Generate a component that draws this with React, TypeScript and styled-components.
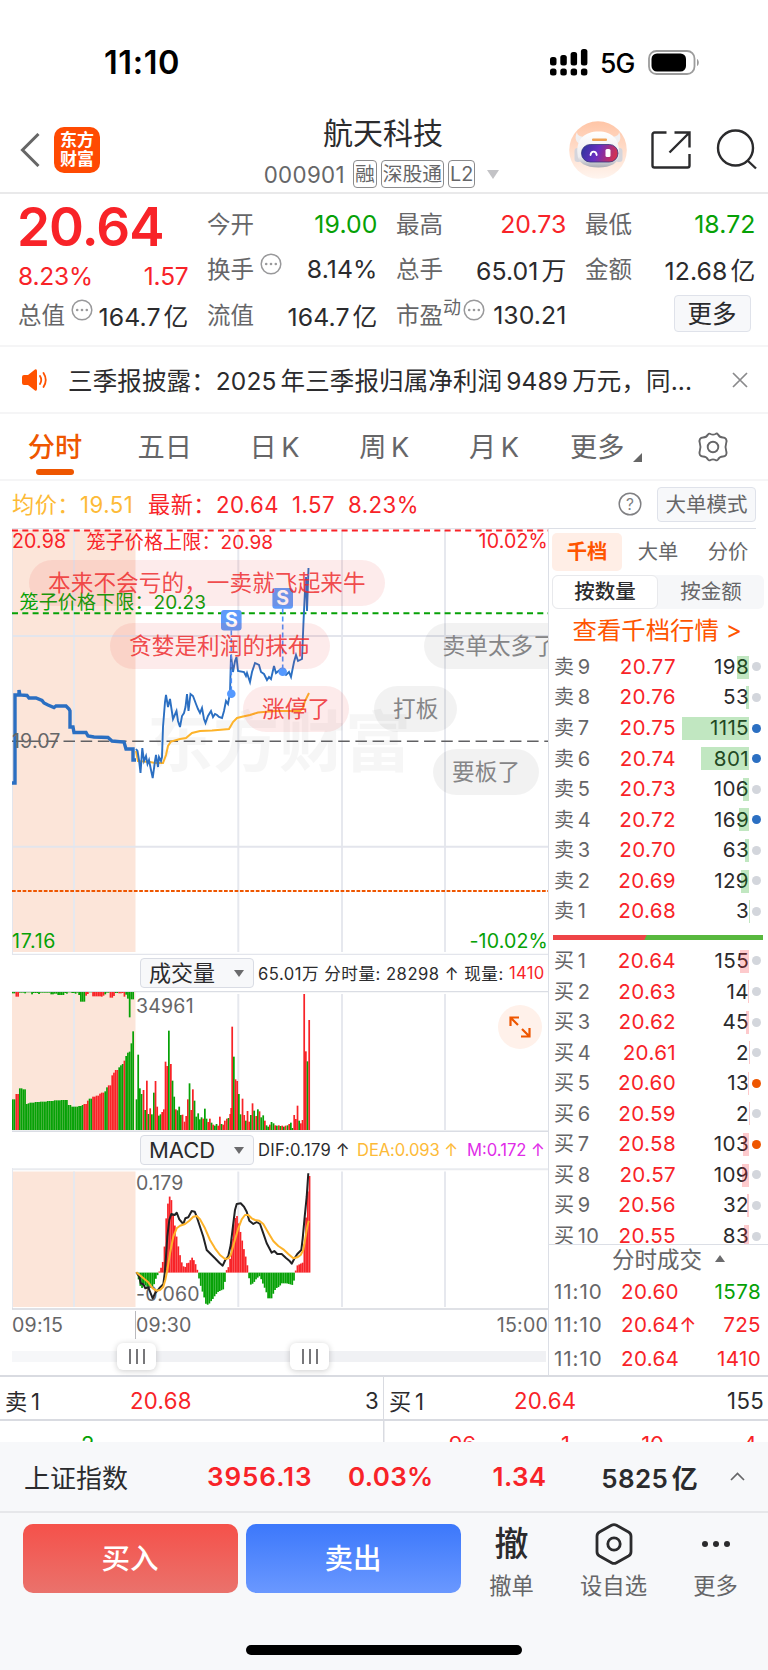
import React from "react";
import styled, { createGlobalStyle, css } from "styled-components";

const RED = "#f82328";
const GREEN = "#06a106";
const ORANGE = "#ee5600";
const DARK = "#2b2b2d";
const GREY = "#666668";
const LINE = "#dcdfe6";

const Global = createGlobalStyle`
  * { box-sizing: border-box; }
  body {
    margin: 0;
    background: #fff;
    color: ${DARK};
    font-family: Inter, "Noto Sans CJK SC", sans-serif;
    font-size: 22px;
    -webkit-font-smoothing: antialiased;
  }
`;

const Screen = styled.div`
  width: 768px;
  height: 1670px;
  overflow: hidden;
  display: flex;
  flex-direction: column;
  background: #fff;
`;

/* ---------- status bar ---------- */
const StatusBar = styled.div`
  height: 110px;
  padding: 15px 68px 0 104px;
  display: flex;
  align-items: center;
  justify-content: space-between;
  color: #000;
`;
const Clock = styled.div`
  font-size: 32.5px;
  font-weight: 600;
  letter-spacing: 0.6px;
`;
const StatusIcons = styled.div`
  display: flex;
  align-items: center;
`;
const Network = styled.span`
  font-size: 26.5px;
  font-weight: 500;
  line-height: 30px;
  width: 35px;
  margin: 0 13px 0 12px;
  padding-top: 1px;
  letter-spacing: -0.8px;
`;

/* ---------- header ---------- */
const Header = styled.header`
  height: 84px;
  flex: none;
  border-bottom: 2px solid #e9e9ea;
  display: grid;
  grid-template-columns: 230px 1fr 230px;
`;
const HeaderLeft = styled.div`
  display: flex;
  align-items: center;
  gap: 14px;
  padding: 0 0 3px 20px;
`;
const Logo = styled.div`
  width: 46px;
  height: 46px;
  border-radius: 10px;
  background: #ff4a02;
  color: #fff;
  font-size: 17px;
  font-weight: 700;
  line-height: 19px;
  padding-top: 4px;
  text-align: center;
`;
const HeaderTitle = styled.div`
  display: flex;
  flex-direction: column;
  align-items: center;
  padding-right: 2px;
`;
const StockName = styled.div`
  font-size: 30px;
  line-height: 40px;
  margin-top: 3px;
`;
const StockMeta = styled.div`
  display: flex;
  align-items: center;
  height: 30px;
  margin-top: 6px;
  padding: 0 3px 0 0;
  gap: 4px;
  color: ${GREY};
`;
const Code = styled.span`
  font-size: 22.3px;
  letter-spacing: 0.35px;
  margin-right: 4px;
`;
const Badge = styled.span`
  height: 28px;
  line-height: 26px;
  border: 1.5px solid #8b8b8d;
  border-radius: 4px;
  font-size: 19.8px;
  padding: 0 1px;
`;
const Caret = styled.i<{ $up?: boolean; $size?: number; $color?: string; $ml?: number }>`
  width: 0;
  height: 0;
  margin-left: ${(p) => p.$ml ?? 0}px;
  border: ${(p) => p.$size ?? 5}px solid transparent;
  ${(p) =>
    p.$up
      ? css`border-top-width: 0; border-bottom: ${(p.$size ?? 5) + 1.5}px solid ${p.$color ?? "#6b6b6d"};`
      : css`border-bottom-width: 0; border-top: ${(p.$size ?? 5) + 2.5}px solid ${p.$color ?? "#6b6b6d"};`}
`;
const HeaderRight = styled.div`
  display: flex;
  align-items: center;
  padding: 0 0 3px 31px;
  gap: 24px;
`;

/* ---------- quote panel ---------- */
const Quote = styled.section`
  height: 153px;
  flex: none;
  border-bottom: 2px solid #f5f5f6;
  padding: 7px 12px 0 18px;
  display: grid;
  grid-template-columns: repeat(4, 170.5px);
  column-gap: 18.5px;
`;
const QuoteCol = styled.div`
  display: flex;
  flex-direction: column;
`;
const QuoteRow = styled.div`
  height: 45.6px;
  display: flex;
  align-items: center;
  justify-content: space-between;
  white-space: nowrap;
`;
const BigPrice = styled.div`
  height: 60px;
  font-size: 53px;
  line-height: 52px;
  font-weight: 600;
  letter-spacing: -0.9px;
  margin-left: -1px;
  color: ${RED};
`;
const PriceDelta = styled.div`
  height: 31px;
  display: flex;
  justify-content: space-between;
  align-items: center;
  padding-bottom: 1px;
  font-size: 24.5px;
  letter-spacing: -0.2px;
  color: ${RED};
`;
const Key = styled.span`
  font-size: 23.5px;
  color: ${GREY};
  display: flex;
  align-items: center;
  margin-top: -2px;
`;
const Val = styled.span<{ $c?: string }>`
  font-size: 24.8px;
  letter-spacing: 0.1px;
  word-spacing: -4px;
  color: ${(p) => p.$c ?? DARK};
`;
const Sup = styled.sup`
  font-size: 18px;
  line-height: 20px;
  margin-top: -12px;
`;
const MoreBtn = styled.button`
  width: 77px;
  height: 37px;
  margin: -2px 5px 0 auto;
  padding: 0;
  border: 1.5px solid #dfe2ea;
  border-radius: 4px;
  background: #f7f8fa;
  color: ${DARK};
  font: 24.5px/32px Inter, "Noto Sans CJK SC", sans-serif;
`;

/* ---------- news + tabs ---------- */
const News = styled.section`
  height: 67px;
  flex: none;
  border-bottom: 2px solid #f5f5f6;
  display: flex;
  align-items: center;
  padding: 0 20px 0 22px;
`;
const NewsText = styled.div`
  font-size: 24.5px;
  letter-spacing: 0.13px;
  word-spacing: -3px;
  margin-left: 20px;
  padding-bottom: 1px;
  flex: 1;
  white-space: nowrap;
`;
const Tabs = styled.nav`
  height: 67px;
  flex: none;
  border-bottom: 2px solid #f5f5f6;
  display: grid;
  grid-template-columns: repeat(5, 109.8px) 119px 1fr;
`;
const Tab = styled.div<{ $on?: boolean }>`
  display: flex;
  flex-direction: column;
  align-items: center;
  padding-top: 14px;
  font-size: 27.2px;
  line-height: 40px;
  word-spacing: -3px;
  white-space: nowrap;
  color: ${(p) => (p.$on ? ORANGE : GREY)};
  font-weight: ${(p) => (p.$on ? 500 : 400)};
  &::after {
    content: "";
    width: 38px;
    height: 6px;
    margin-top: 1px;
    border-radius: 3px;
    background: ${(p) => (p.$on ? ORANGE : "transparent")};
  }
`;
const MoreTab = styled.div`
  display: flex;
  align-items: flex-start;
  padding: 14px 0 0 21px;
  gap: 9px;
  font-size: 27.2px;
  line-height: 40px;
  color: ${GREY};
  svg { margin-top: 25px; }
`;
const GearSlot = styled.div`
  padding: 16px 0 0 28px;
`;

/* ---------- price summary ---------- */
const Summary = styled.section`
  height: 47px;
  flex: none;
  display: flex;
  align-items: center;
  padding: 1px 12px 0;
  font-size: 22.2px;
  line-height: 30px;
  color: ${RED};
  white-space: nowrap;
`;
const Avg = styled.span`
  color: #fdba37;
  width: 136px;
  letter-spacing: 0.5px;
`;
const Nums = styled.span`
  margin-right: 13px;
  letter-spacing: 0.45px;
`;
const Help = styled.svg`
  margin: -2px 0 0 auto;
`;
const BigOrderBtn = styled.button`
  width: 99px;
  height: 35px;
  padding: 0;
  margin: -1px 0 0 15px;
  border: 1.5px solid #dfe2ea;
  border-radius: 4px;
  background: #f7f8fa;
  color: ${GREY};
  font: 20.5px/30px Inter, "Noto Sans CJK SC", sans-serif;
`;

/* ---------- main split ---------- */
const Main = styled.main`
  height: 849px;
  flex: none;
  display: grid;
  grid-template-columns: 548px 220px;
  border-bottom: 2px solid #d9dbe1;
`;
const ChartCol = styled.div`
  padding-left: 12px;
  display: flex;
  flex-direction: column;
  min-width: 0;
`;
const ChartBox = styled.div<{ $h: number }>`
  position: relative;
  flex: none;
  height: ${(p) => p.$h}px;
  overflow: hidden;
  svg { display: block; }
`;
const Bubble = styled.div<{ $x: number; $y: number; $hot?: boolean }>`
  position: absolute;
  left: ${(p) => p.$x}px;
  top: ${(p) => p.$y}px;
  height: 46px;
  line-height: 45px;
  padding: 0 19px;
  border-radius: 23px;
  font-size: 22.6px;
  letter-spacing: 0.1px;
  white-space: nowrap;
  background: ${(p) => (p.$hot ? "rgba(235,60,60,.1)" : "rgba(0,0,0,.05)")};
  color: ${(p) => (p.$hot ? "rgba(238,40,42,.84)" : "#858587")};
`;
const IndicatorBar = styled.div`
  height: 36px;
  flex: none;
  display: flex;
  align-items: center;
  padding-left: 128px;
  font-size: 16.6px;
  white-space: nowrap;
`;
const Picker = styled.div`
  width: 114px;
  height: 30px;
  margin-right: 4px;
  padding: 0 9px 0 8px;
  border: 1.5px solid #d9dce4;
  border-radius: 4px;
  background: #f7f8fa;
  display: flex;
  align-items: center;
  justify-content: space-between;
  font-size: 22px;
  line-height: 26px;
`;
const Stat = styled.span<{ $c?: string; $w?: number; $ls?: number }>`
  color: ${(p) => p.$c ?? DARK};
  letter-spacing: ${(p) => p.$ls ?? 0.35}px;
  ${(p) => p.$w && css`width: ${p.$w}px;`}
`;
const Expand = styled.button`
  position: absolute;
  right: 6px;
  top: 14px;
  width: 44px;
  height: 44px;
  padding: 11px;
  border: 0;
  border-radius: 50%;
  background: #fff1ea;
`;
const Axis = styled.div`
  height: 28px;
  flex: none;
  margin-top: 1px;
  display: grid;
  grid-template-columns: 123px 1fr auto;
  font-size: 19.6px;
  letter-spacing: 0.2px;
  line-height: 28px;
  color: ${GREY};
`;
const OpenTime = styled.span`
  border-left: 1.5px solid #b9b9bd;
`;
const Slider = styled.div`
  height: 35px;
  flex: none;
  display: flex;
  align-items: center;
  background: linear-gradient(#f6f7f9, #f6f7f9) 0 12px / 120px 11px no-repeat,
    linear-gradient(#f0f1f4, #f0f1f4) 110px 12px / 424px 11px no-repeat;
`;
const Handle = styled.div<{ $gap: number }>`
  width: 39px;
  height: 27px;
  margin-left: ${(p) => p.$gap}px;
  border-radius: 6px;
  background: #fff;
  box-shadow: 0 1px 6px rgba(0, 0, 0, 0.2);
  display: flex;
  align-items: center;
  justify-content: center;
  gap: 5px;
  i { width: 2px; height: 15px; background: #77777a; }
`;

/* ---------- order book ---------- */
const Book = styled.aside`
  border-left: 1.5px solid ${LINE};
  display: flex;
  flex-direction: column;
  min-width: 0;
`;
const BookTabs = styled.div`
  border-top: 1.5px solid ${LINE};
  margin-right: 12px;
  padding: 4px 0 0 3px;
  height: 47px;
  flex: none;
  display: grid;
  grid-template-columns: 70px 72px 68px;
`;
const BookTab = styled.div<{ $on?: boolean }>`
  height: 38px;
  line-height: 37px;
  text-align: center;
  font-size: 20.3px;
  border-radius: 5px;
  color: ${(p) => (p.$on ? "#ff5500" : GREY)};
  font-weight: ${(p) => (p.$on ? 700 : 400)};
  background: ${(p) => (p.$on ? "#ffeee6" : "transparent")};
`;
const Segment = styled.div`
  flex: none;
  height: 34px;
  margin: 0 4px 0 3px;
  border-radius: 6px;
  background: #f6f7f9;
  display: grid;
  grid-template-columns: 1fr 1fr;
`;
const SegItem = styled.div<{ $on?: boolean }>`
  line-height: ${(p) => (p.$on ? 32 : 34)}px;
  font-size: 20.5px;
  text-align: center;
  border-radius: 6px;
  ${(p) =>
    p.$on
      ? css`background: #fff; border: 1.5px solid #e8e9ec; font-weight: 500; color: ${DARK};`
      : css`color: ${GREY};`}
`;
const BookLink = styled.a`
  height: 42.6px;
  flex: none;
  padding-left: 23.5px;
  line-height: 43px;
  font-size: 24.4px;
  color: #ff5500;
  white-space: nowrap;
`;
const Level = styled.div`
  position: relative;
  height: 30.57px;
  flex: none;
  display: grid;
  grid-template-columns: 66px 56px 1fr 19px;
  align-items: center;
  padding-left: 5px;
  font-size: 20.6px;
  line-height: 30px;
  letter-spacing: 0.35px;
`;
const Side = styled.span`
  color: ${GREY};
  font-size: 20px;
  white-space: nowrap;
  word-spacing: -2.5px;
`;
const Price = styled.span`
  color: ${RED};
  display: flex;
  justify-content: flex-end;
`;
const Volume = styled.span`
  text-align: right;
`;
const Depth = styled.i<{ $sell: boolean }>`
  position: absolute;
  right: 19px;
  top: 4px;
  height: 23px;
  background: ${(p) => (p.$sell ? "rgba(6,161,6,.25)" : "rgba(248,35,40,.24)")};
`;
const Dot = styled.i<{ $c: string }>`
  width: 9px;
  height: 9px;
  margin-left: 2.5px;
  border-radius: 50%;
  background: ${(p) => p.$c};
`;
const Ratio = styled.div`
  height: 5px;
  flex: none;
  margin: 8px 5px 6px 4px;
  background: linear-gradient(115deg, #ee4447 44%, #58b83e 44.2%);
`;
const BuyList = styled.div`
  height: 299.4px;
  flex: none;
  overflow: hidden;
  border-bottom: 1.5px solid ${LINE};
`;
const TradeTitle = styled.div`
  height: 29.5px;
  flex: none;
  display: flex;
  align-items: center;
  justify-content: center;
  gap: 13px;
  padding: 0 0 3px 28px;
  margin-right: 8px;
  color: ${GREY};
  font-size: 22.5px;
`;
const Trade = styled.div`
  height: 33.4px;
  flex: none;
  display: grid;
  grid-template-columns: 67px 1fr 60px;
  align-items: center;
  padding: 0 7px 0 5px;
  font-size: 20.6px;
  letter-spacing: 0.9px;
  color: ${GREY};
`;
const TradeCell = styled.span<{ $c: string; $right?: boolean }>`
  color: ${(p) => p.$c};
  letter-spacing: 0.35px;
  white-space: nowrap;
  text-align: ${(p) => (p.$right ? "right" : "left")};
`;

/* ---------- best bid / ask ---------- */
const BestRow = styled.div`
  height: 44px;
  flex: none;
  display: grid;
  grid-template-columns: 383px 385px;
  border-bottom: 2px solid #d9dbe1;
`;
const BestCell = styled.div`
  display: grid;
  grid-template-columns: 125px 1fr auto;
  align-items: center;
  padding: 4px 4px 0 5px;
  font-size: 22.2px;
  letter-spacing: 0.3px;
  word-spacing: -3px;
  & + & { border-left: 1.5px solid #d9dbe1; }
  em { color: ${RED}; font-style: normal; }
`;
const CutRow = styled.div`
  height: 21px;
  flex: none;
  overflow: hidden;
  display: grid;
  grid-template-columns: 383px 93px 94px 94px 93px;
  padding-top: 8px;
  line-height: 30px;
  text-align: right;
  color: ${RED};
  background: linear-gradient(#d9dbe1, #d9dbe1) 383px 0 / 1.5px 100% no-repeat;
`;
const CutFirst = styled.span`
  color: ${GREEN};
  text-align: left;
  padding-left: 81px;
`;

/* ---------- bottom ---------- */
const IndexBar = styled.div`
  height: 71px;
  flex: none;
  background: #f7f8fa;
  border-bottom: 2px solid #e6e7ea;
  display: grid;
  grid-template-columns: 183px 141px 105px 93.5px 151.5px 1fr;
  align-items: center;
  padding-left: 24px;
  padding-bottom: 1px;
  font-size: 26px;
`;
const IndexName = styled.span`
  font-size: 26px;
`;
const IndexNum = styled.b<{ $right?: boolean; $wide?: boolean; $c?: string }>`
  font-weight: 600;
  color: ${(p) => p.$c ?? RED};
  text-align: ${(p) => (p.$right ? "right" : "left")};
  letter-spacing: ${(p) => (p.$wide ? 0.95 : 0.35)}px;
  word-spacing: -3.5px;
`;
const IndexCaret = styled.svg`
  margin-left: 32px;
`;
const Footer = styled.footer`
  flex: 1;
  background: #f7f8fa;
  display: flex;
  flex-direction: column;
  justify-content: space-between;
  align-items: center;
  padding-bottom: 15px;
`;
const Actions = styled.div`
  width: 100%;
  display: grid;
  grid-template-columns: 215px 215px 85px 103px 85px;
  column-gap: 8px;
  padding: 11px 0 0 23px;
`;
const TradeBtn = styled.button<{ $from: string; $to: string }>`
  height: 69px;
  border: 0;
  border-radius: 10px;
  color: #fff;
  padding: 0 1px 0 0;
  font: 500 28.5px/66px Inter, "Noto Sans CJK SC", sans-serif;
  background: linear-gradient(${(p) => p.$from}, ${(p) => p.$to});
`;
const Tool = styled.div`
  display: flex;
  flex-direction: column;
  align-items: center;
  font-size: 22.3px;
  line-height: 30px;
  color: ${GREY};
`;
const ToolIcon = styled.div`
  height: 47px;
  display: flex;
  align-items: center;
  padding-bottom: 7px;
  font-size: 34px;
  font-weight: 500;
  color: ${DARK};
`;
const HomeBar = styled.div`
  width: 276px;
  height: 10px;
  border-radius: 5px;
  background: #000;
`;

/* ---------- icons ---------- */
const InfoSvg = styled.svg<{ $ml: number }>`
  margin: -8px 0 0 ${(p) => p.$ml}px;
`;
const MoreInfo = ({ ml = 6 }: { ml?: number }) => (
  <InfoSvg $ml={ml} width="22" height="22" viewBox="0 0 22 22">
    <circle cx="11" cy="11" r="9.8" fill="none" stroke="#99999b" strokeWidth="1.5" />
    <g fill="#99999b"><circle cx="6.2" cy="11" r="1.3" /><circle cx="11" cy="11" r="1.3" /><circle cx="15.8" cy="11" r="1.3" /></g>
  </InfoSvg>
);

const Robot = () => (
  <svg width="58" height="58" viewBox="0 0 58 58">
    <defs>
      <linearGradient id="halo" x1="0" y1="0" x2="0" y2="1"><stop offset="0" stopColor="#ffc5a6" /><stop offset="1" stopColor="#fff5ef" /></linearGradient>
      <linearGradient id="shell" x1="0" y1="0" x2="0" y2="1"><stop offset="0" stopColor="#fff" /><stop offset=".7" stopColor="#ededf0" /><stop offset="1" stopColor="#a9abb4" /></linearGradient>
      <linearGradient id="visor" x1="0" y1="0" x2="1" y2=".2"><stop offset="0" stopColor="#2a349b" /><stop offset=".5" stopColor="#6a2fc0" /><stop offset="1" stopColor="#cf3156" /></linearGradient>
    </defs>
    <circle cx="29" cy="29" r="28.8" fill="url(#halo)" />
    <path d="M13 23C7 23 5 17 8 11c0 4 4 5 10 5zM45 23c6 0 8-6 5-12 0 4-4 5-10 5z" fill="#f1f0f2" />
    <rect x="5.500" y="27" width="7" height="14" rx="3" fill="#d5d5dc" />
    <rect x="46.500" y="27" width="7" height="14" rx="3" fill="#d5d5dc" />
    <path d="M8.500 33C7 18 16 10.500 29.500 10.500S51 18 50 33c0 9-8 13.500-20.500 13.500S8.500 42 8.500 33z" fill="url(#shell)" />
    <rect x="23" y="17.500" width="15" height="2.600" rx="1" fill="#f0a256" />
    <rect x="12.500" y="23.500" width="36.500" height="17.500" rx="8.700" fill="url(#visor)" stroke="#35367c" strokeWidth=".8" />
    <path d="M21.500 34c.7-4.500 5.500-4.500 6.200 0" fill="none" stroke="#fff" strokeWidth="1.800" strokeLinecap="round" />
    <rect x="36.500" y="28" width="5" height="8" rx="1.500" fill="#fff" />
  </svg>
);

/* ---------- data ---------- */
const sells: [number, string, number, string][] = [
  [9, "20.77", 198, "#d3d6dc"], [8, "20.76", 53, "#d3d6dc"], [7, "20.75", 1115, "#2b6fc2"],
  [6, "20.74", 801, "#2b6fc2"], [5, "20.73", 106, "#d3d6dc"], [4, "20.72", 169, "#2b6fc2"],
  [3, "20.70", 63, "#d3d6dc"], [2, "20.69", 129, "#d3d6dc"], [1, "20.68", 3, "#d3d6dc"],
];
const buys: [number, string, number, string][] = [
  [1, "20.64", 155, "#d3d6dc"], [2, "20.63", 14, "#d3d6dc"], [3, "20.62", 45, "#d3d6dc"],
  [4, "20.61", 2, "#d3d6dc"], [5, "20.60", 13, "#ee5600"], [6, "20.59", 2, "#d3d6dc"],
  [7, "20.58", 103, "#ee5600"], [8, "20.57", 109, "#d3d6dc"], [9, "20.56", 32, "#d3d6dc"],
  [10, "20.55", 83, "#d3d6dc"],
];

const pts = (s: string) => s.trim().split(/\s+/).map((p) => p.split(",").map(Number));

/* Pre-open auction: x, top — measured in thirds of a pixel from the pane origin. */
const auction = pts(`36,358 48,342 54,325 65,328 77,372 82,370 90,368 105,366 120,365 140,363 160,361 180,360
  202,375 214,380 235,378 245,375 252,372 258,362 268,356 278,350 288,347 296,341 304,338 312,334 316,322 325,316
  331,288 336,286 340,278 346,270 352,262 358,256 366,252 370,242 376,228 382,218 386,215 391,190 396,154 403,154`);
const inRanges = (x: number, r: number[][]) => r.some(([a, b]) => x >= a && x < b);
const auctionRed = [[48, 54], [252, 268], [275, 314], [325, 352], [368, 374]];
const matched = pts(`36,40 48,50 54,38 70,40 78,37 92,43 97,39 114,42 120,38 150,43 160,41 170,45 190,39 196,41 202,37
  214,39 222,41 228,38 236,45 241,65 253,47 258,38 262,42 267,37 274,49 300,50 308,47 315,43 320,38 330,53 341,48 346,39
  352,40 366,39 368,50 374,44 379,56 384,112 390,58 402,58`);
const matchedRed = [[48, 54], [253, 258], [262, 267], [274, 315], [330, 346], [352, 374]];

const minutes = `407:358g 412:224g 417:325g 422:342g 428:330r 433:390g 438:302r 443:402g 448:385r 453:403g 459:338g 464:303r
  469:380r 474:407g 479:403g 484:396r 489:388r 494:245r 499:258r 504:152g 510:252r 515:302g 520:350g 525:388r 530:391g
  535:380g 540:405g 545:404r 551:425r 556:408r 561:358r 566:310g 571:390r 576:328r 581:362g 586:410g 592:400g 597:418g
  602:412g 607:416r 612:386g 617:416g 622:426r 627:416r 632:428g 637:434r 642:437g 647:432g 652:437r 657:410r 662:432g
  667:434r 672:422r 678:416r 683:414g 688:402r 691:384r 694:140r 699:230g 704:298r 709:303r 714:342g 719:403g 725:356r
  730:405r 735:422g 740:393r 745:425r 750:405g 755:370r 760:392g 766:408r 771:388g 776:394r 781:412g 787:406g 792:422r
  797:436g 802:440g 807:434r 812:426g 818:430g 823:436r 828:437g 834:436r 839:438g 844:437r 849:440g 854:437r 860:436g
  865:432r 870:428g 875:444g 880:405r 885:417r 890:377r 895:422g 900:430r 905:420r 910:42r 915:214r 920:244g 925:120r`
  .trim().split(/\s+/).map((t) => {
    const [x, v] = t.split(":");
    return { x: +x, top: parseInt(v, 10), up: v.endsWith("r") };
  });

const macdShape = pts(`409,967 415,985 420,1005 425,1018 430,1000 440,1010 450,1012 460,1010 468,985 474,973 480,960 487,945
  492,910 496,855 500,780 506,750 511,733 516,760 520,800 526,835 531,868 536,895 541,920 546,940 552,952 558,950
  562,935 568,940 573,925 578,922 583,934 590,950 595,975 600,1000 606,1020 612,1040 618,1062 625,1065 632,1055
  640,1045 646,1035 655,1025 670,1018 676,990 680,960 686,950 690,930 694,885 698,835 705,805 712,797 718,830
  724,858 730,890 736,915 742,945 746,975 750,1005 760,1000 768,988 778,978 785,990 792,1010 798,1020 802,1045
  815,1045 822,1025 828,1015 838,1010 845,1000 860,1000 878,1005 884,985 889,948 900,942 908,938 912,900 917,820
  922,750 926,678 932,678`);
const sample = (shape: number[][], x: number, step: boolean) => {
  let i = 0;
  while (i < shape.length - 2 && shape[i + 1][0] <= x) i++;
  const [a, b] = [shape[i], shape[i + 1]];
  return step ? a[1] : a[1] + ((b[1] - a[1]) * (x - a[0])) / (b[0] - a[0]);
};
const toPath = (s: string) =>
  pts(s).map(([x, y], i) => `${i ? "L" : "M"}${(x / 3).toFixed(1)} ${(950 + y / 3).toFixed(1)}`).join("");

const dif = toPath(`409,967 418,980 422,1000 430,1003 436,1015 445,1012 450,1025 458,1045 465,1030 478,1015 490,1003 494,970
  498,920 502,860 508,810 514,792 524,795 530,788 538,808 550,822 556,805 565,802 575,783 584,785 590,800 600,830
  610,860 620,900 632,912 645,925 658,938 668,947 676,930 685,918 692,885 700,820 705,780 710,762 722,760 732,770
  740,785 748,812 760,822 770,816 780,822 790,850 800,880 815,908 823,903 832,912 845,912 858,924 868,932 875,941
  882,928 892,912 904,900 908,865 914,800 920,740 925,670`);
const dea = toPath(`409,967 425,980 445,997 458,1015 470,1022 480,1020 490,1010 496,990 502,960 510,910 520,860 530,835
  540,827 555,822 568,812 580,800 590,798 600,808 615,835 630,870 645,895 660,915 675,927 685,925 692,915 702,880
  715,835 725,808 735,795 745,795 755,805 765,810 778,812 790,822 805,848 820,873 835,888 850,898 865,912 880,925
  892,922 902,915 910,900 916,865 922,830 926,812`);

const preOpen = "12,783 15,783 15,695 19,695 19,690 20,695 27,695.500 29,698 36,698 42,700.500 44,703 48,705 54,707.500 56,706 66,706 69,709 70,711 70,727 73,727 74,732.500 86,732.500 88,736 94,737 108,737.500 112,741 124,742 126,749 133,749 133,760 136,760";
const intraday = "136,749 137.500,751 139,760 140.500,773 142.300,748 144,761 146,756 147.500,764 149,760 151,770 152.700,778 155,761 156,755 158,767 159,757 161,761 162,757 163,727 165,702 166,695 168,707 170,699 173,719 176.500,711 178,721 180,727 182,716 184,713 185.500,707 187,694 188.500,711 190.500,694 193,696 196,704 198,709 200,713 202,708 204,719 205.500,723 208,716 211,711 213,717 215,714 217,715 219,717 222,718 224,711 226,701 228,704 230,693 231,655 233,672 235,661 236.500,657 238,671 244,672 246,676 247,673 250,682 252,672 255,663 259,665 261,672 264,674 267,680 269,677 271,679 274,666 276,673 281,669 283,672 286,675 289,672 291,677 294,662 296,655 298,661 302,659 303.500,622 305,590 306,577 307,611 308.500,568";
const average = "136,751 138,761 150,762 155,763 163,763 166,755 168,746 171,741.500 180,739 186,738 192,733 200,731 212,730.500 229,729 233,722 237,718 243,716.500 250,715 258,712.500 275,711 300,711 303,708 305,701 309,693";

const Columns = ({ top, bottom }: { top: number; bottom: number }) => (
  <g stroke="#e6e8ee" strokeWidth="2">
    {[74, 238.3, 342, 445].map((x) => <line key={x} x1={x} x2={x} y1={top} y2={bottom} />)}
  </g>
);

const Marker = ({ x, y, end }: { x: number; y: number; end: number }) => (
  <g>
    <line x1={x} x2={x} y1={y + 10} y2={end} stroke="#4d90fb" strokeWidth="1.6" strokeDasharray="5 3" />
    <circle cx={x} cy={end} r="4.3" fill="#5599ff" />
    <rect x={x - 10.3} y={y - 10.3} width="20.600" height="20.600" rx="3" fill="#5f9bfa" />
    <text x={x} y={y + 7} textAnchor="middle" fontSize="19.500" fontWeight="700" fill="#fff">S</text>
  </g>
);

const PriceChart = () => (
  <ChartBox $h={427}>
    <svg width="536" height="427" viewBox="12 528 536 427">
      <rect x="12" y="530" width="123.500" height="422" fill="#fce5d9" />
      <Columns top={530} bottom={952} />
      <g stroke="#e3e5ec">
        <line x1="12" x2="548" y1="528.500" y2="528.500" strokeWidth="1.300" />
        <line x1="12.500" x2="12.500" y1="528" y2="955" strokeWidth="1" />
        <line x1="12" x2="548" y1="636" y2="636" strokeWidth="2" />
        <line x1="12" x2="548" y1="846.700" y2="846.700" strokeWidth="2" />
        <line x1="12" x2="548" y1="954.300" y2="954.300" strokeWidth="1.300" />
      </g>
      <text x="147" y="766" fontSize="66" fontWeight="700" fill="#000" opacity=".03">东方财富</text>
      <line x1="12" x2="548" y1="530.500" y2="530.500" stroke={RED} strokeWidth="2" strokeDasharray="6 4.300" />
      <line x1="12" x2="548" y1="613.300" y2="613.300" stroke={GREEN} strokeWidth="2" strokeDasharray="6 4.300" />
      <line x1="12" x2="548" y1="741.300" y2="741.300" stroke="#606063" strokeWidth="1.400" strokeDasharray="11.500 5.670" />
      <line x1="12" x2="548" y1="891" y2="891" stroke={ORANGE} strokeWidth="2.200" strokeDasharray="3.700 1.600" />
      <polyline points={average} fill="none" stroke="#fdb32a" strokeWidth="2" />
      <polyline points={preOpen} fill="none" stroke="#2b6fc2" strokeWidth="3.400" />
      <polyline points={intraday} fill="none" stroke="#2b6fc2" strokeWidth="1.900" />
      <g fontSize="19.600" letterSpacing=".15">
        <text x="12" y="548" fill={RED}>20.98</text>
        <text x="86.500" y="549" fill={RED} fontSize="19">笼子价格上限：20.98</text>
        <text x="548" y="548" fill={RED} textAnchor="end">10.02%</text>
        <text x="19.500" y="609" fill={GREEN} fontSize="19">笼子价格下限：20.23</text>
        <text x="12" y="748" fill={GREY}>19.07</text>
        <text x="12" y="947.500" fill={GREEN} letterSpacing=".7">17.16</text>
        <text x="548" y="947.500" fill={GREEN} textAnchor="end">-10.02%</text>
      </g>
      <Marker x={231.3} y={620.3} end={693.7} />
      <Marker x={282.7} y={598.4} end={671.7} />
    </svg>
    <Bubble $hot $x={17} $y={31.5}>本来不会亏的，一卖就飞起来牛</Bubble>
    <Bubble $hot $x={98} $y={94.5}>贪婪是利润的抹布</Bubble>
    <Bubble $hot $x={231} $y={157.5}>涨停了</Bubble>
    <Bubble $x={362} $y={157.5}>打板</Bubble>
    <Bubble $x={411.5} $y={94.5}>卖单太多了</Bubble>
    <Bubble $x={421} $y={220.5}>要板了</Bubble>
  </ChartBox>
);

const steps = Array.from({ length: 70 }, (_, i) => 36 + i * 5.23);

const VolumeChart = () => (
  <ChartBox $h={141}>
    <svg width="536" height="141" viewBox="12 991 536 141">
      <rect x="12" y="992" width="123.500" height="138" fill="#fce5d9" />
      <Columns top={994} bottom={1130} />
      <line x1="12" x2="548" y1="991.500" y2="991.500" stroke="#dadde4" strokeWidth="1.500" />
      {steps.map((x) => {
        const top = 980 + sample(auction, x + 2, true) / 3;
        return <rect key={x} x={x / 3} y={top} width="1.700" height={1130 - top} fill={inRanges(x + 2, auctionRed) ? RED : GREEN} />;
      })}
      {steps.map((x) => {
        const h = (sample(matched, x + 2, true) - 36) / 3;
        return <rect key={x} x={x / 3} y="992" width="1.740" height={h} fill={inRanges(x + 2, matchedRed) ? RED : GREEN} />;
      })}
      {minutes.map((b) => (
        <rect key={b.x} x={b.x / 3} y={980 + b.top / 3} width="1.730" height={(450 - b.top) / 3} fill={b.up ? RED : GREEN} />
      ))}
      <line x1="12" x2="548" y1="1131.300" y2="1131.300" stroke="#dadde4" strokeWidth="1.500" />
      <text x="136" y="1013" fontSize="19.500" fill={GREY} letterSpacing=".2">34961</text>
    </svg>
    <Expand>
      <svg width="22" height="22" viewBox="0 0 22 22" fill="none" stroke={ORANGE} strokeWidth="2.200">
        <path d="M1.500 10V1.500H10M1.500 1.500L9 9M20.500 12v8.500H12M20.500 20.500L13 13" />
      </svg>
    </Expand>
  </ChartBox>
);

const MacdChart = () => (
  <ChartBox $h={142}>
    <svg width="536" height="142" viewBox="12 1168 536 142">
      <line x1="12" x2="548" y1="1169.300" y2="1169.300" stroke="#e9ebef" strokeWidth="2" />
      <rect x="12" y="1171.500" width="123.500" height="135.500" fill="#fce5d9" />
      <Columns top={1171.5} bottom={1307} />
      <line x1="12.500" x2="12.500" y1="1168" y2="1309" stroke="#e6e8ee" />
      {Array.from({ length: 101 }, (_, i) => 408 + i * 5.18).map((x) => {
        const y = 950 + sample(macdShape, x + 2.6, false) / 3;
        const zero = 1272.6;
        return <rect key={x} x={x / 3} width="1.740" y={Math.min(y, zero)} height={Math.abs(y - zero)} fill={y < zero ? RED : GREEN} />;
      })}
      <text x="136" y="1190" fontSize="19.500" fill={GREY} letterSpacing=".2">0.179</text>
      <text x="136" y="1301" fontSize="19.500" fill={GREY} letterSpacing=".2">-0.060</text>
      <path d={dif} fill="none" stroke="#222224" strokeWidth="2" strokeLinejoin="round" />
      <path d={dea} fill="none" stroke="#fdb32a" strokeWidth="2" strokeLinejoin="round" />
      <line x1="12" x2="548" y1="1309" y2="1309" stroke="#d4d7de" strokeWidth="1.500" />
    </svg>
  </ChartBox>
);

const Levels = ({ rows, sell }: { rows: typeof sells; sell: boolean }) => (
  <>
    {rows.map(([n, price, vol, dot]) => (
      <Level key={n}>
        <Side>{sell ? "卖" : "买"} {n}</Side>
        <Price>{price}</Price>
        <Volume>{vol}</Volume>
        <Dot $c={dot} />
        <Depth $sell={sell} style={{ width: vol * 0.06 }} />
      </Level>
    ))}
  </>
);

export default function App() {
  return (
    <Screen>
      <Global />
      <StatusBar>
        <Clock>11:10</Clock>
        <StatusIcons>
          <svg width="38" height="27" viewBox="0 0 38 27">
            {[8, 6, 3, 0].map((t, i) => (
              <g key={t}>
                <rect x={i * 10.3} y={t} width="6.500" height={16.5 - t} rx="2.500" />
                <rect x={i * 10.3} y="19.500" width="6.500" height="7" rx="2.500" />
              </g>
            ))}
          </svg>
          <Network>5G</Network>
          <svg width="52" height="25" viewBox="0 0 52 25">
            <rect x="1" y="1" width="45.500" height="23" rx="7.500" fill="none" stroke="#9c9c9c" strokeWidth="1.800" />
            <rect x="3.500" y="3.500" width="34.500" height="18" rx="5.500" />
            <path d="M49 9c2.400 1 2.400 6 0 7z" fill="#9c9c9c" />
          </svg>
        </StatusIcons>
      </StatusBar>

      <Header>
        <HeaderLeft>
          <svg width="20" height="34" viewBox="0 0 20 34" fill="none" stroke="#666" strokeWidth="3">
            <path d="M18.500 1L2.500 17l16 16" />
          </svg>
          <Logo>东方<br />财富</Logo>
        </HeaderLeft>
        <HeaderTitle>
          <StockName>航天科技</StockName>
          <StockMeta>
            <Code>000901</Code>
            <Badge>融</Badge>
            <Badge>深股通</Badge>
            <Badge>L2</Badge>
            <Caret $size={6.5} $color="#c3c3c6" $ml={8} />
          </StockMeta>
        </HeaderTitle>
        <HeaderRight>
          <Robot />
          <svg width="40" height="38" viewBox="0 0 40 38" fill="none" stroke={DARK} strokeWidth="2.400">
            <path d="M15.500 1.500H3.500a2 2 0 0 0-2 2v31a2 2 0 0 0 2 2h33a2 2 0 0 0 2-2V23M23.500 1.500h15v15M38 2L18.500 21.500" />
          </svg>
          <svg width="42" height="42" viewBox="0 0 42 42" fill="none" stroke={DARK} strokeWidth="2.400">
            <circle cx="20.500" cy="19" r="17.500" /><path d="M32.500 31.500l8.500 8" />
          </svg>
        </HeaderRight>
      </Header>

      <Quote>
        <QuoteCol>
          <BigPrice>20.64</BigPrice>
          <PriceDelta><span>8.23%</span><span>1.57</span></PriceDelta>
          <QuoteRow><Key>总值<MoreInfo /></Key><Val>164.7 亿</Val></QuoteRow>
        </QuoteCol>
        <QuoteCol>
          <QuoteRow><Key>今开</Key><Val $c={GREEN}>19.00</Val></QuoteRow>
          <QuoteRow><Key>换手<MoreInfo /></Key><Val>8.14%</Val></QuoteRow>
          <QuoteRow><Key>流值</Key><Val>164.7 亿</Val></QuoteRow>
        </QuoteCol>
        <QuoteCol>
          <QuoteRow><Key>最高</Key><Val $c={RED}>20.73</Val></QuoteRow>
          <QuoteRow><Key>总手</Key><Val>65.01 万</Val></QuoteRow>
          <QuoteRow><Key>市盈<Sup>动</Sup><MoreInfo ml={2} /></Key><Val>130.21</Val></QuoteRow>
        </QuoteCol>
        <QuoteCol>
          <QuoteRow><Key>最低</Key><Val $c={GREEN}>18.72</Val></QuoteRow>
          <QuoteRow><Key>金额</Key><Val>12.68 亿</Val></QuoteRow>
          <QuoteRow><MoreBtn>更多</MoreBtn></QuoteRow>
        </QuoteCol>
      </Quote>

      <News>
        <svg width="26" height="22" viewBox="0 0 26 22">
          <path d="M2 6h4l7-5.500q2-.8 2 1.500v18q0 2.300-2 1.500L6 16H2q-2 0-2-2V8q0-2 2-2z" fill="#ff5200" />
          <path d="M18 7q2.500 4 0 8M21.500 4q4.500 7 0 14" fill="none" stroke="#ff5200" strokeWidth="1.800" strokeLinecap="round" />
        </svg>
        <NewsText>三季报披露：2025 年三季报归属净利润 9489 万元，同...</NewsText>
        <svg width="16" height="16" viewBox="0 0 16 16" stroke="#8a8a8c" strokeWidth="1.700"><path d="M1 1l14 14M15 1L1 15" /></svg>
      </News>

      <Tabs>
        <Tab $on>分时</Tab>
        <Tab>五日</Tab>
        <Tab>日 K</Tab>
        <Tab>周 K</Tab>
        <Tab>月 K</Tab>
        <MoreTab>更多<svg width="9" height="9" viewBox="0 0 9 9"><path d="M9 0v9H0z" fill="#666" /></svg></MoreTab>
        <GearSlot>
          <svg width="34" height="34" viewBox="0 0 34 34" fill="none" stroke={GREY} strokeWidth="1.900" strokeLinejoin="round">
            <path d="M12 4.500Q13 3 14.500 4q2.500 1.300 5 0Q21 3 22 4.500q1.500 3 5 3Q29 7.500 30 9q1 2 .3 3.500-1.600 4.500 0 9Q31 23 30 25q-1 1.500-3 1.500-3.500 0-5 3-1 1.500-2.500.5-2.500-1.300-5 0-1.500 1-2.500-.5-1.500-3-5-3-2 0-3-1.500-1-2-.3-3.500 1.600-4.500 0-9Q3 11 4 9q1-1.500 3-1.500 3.500 0 5-3z" />
            <circle cx="17" cy="17" r="5.300" />
          </svg>
        </GearSlot>
      </Tabs>

      <Summary>
        <Avg>均价：19.51</Avg>
        <Nums>最新：20.64</Nums><Nums>1.57</Nums><Nums>8.23%</Nums>
        <Help width="24" height="24" viewBox="0 0 24 24">
          <circle cx="12" cy="12" r="10.800" fill="none" stroke="#808083" strokeWidth="1.500" />
          <text x="12" y="17.500" textAnchor="middle" fontSize="15.500" fill="#808083">?</text>
        </Help>
        <BigOrderBtn>大单模式</BigOrderBtn>
      </Summary>

      <Main>
        <ChartCol>
          <PriceChart />
          <IndicatorBar>
            <Picker>成交量<Caret $size={5} /></Picker>
            <Stat $ls={0.5}>65.01万 分时量: 28298 ↑ 现量:&nbsp;</Stat><Stat $c={RED}>1410</Stat>
          </IndicatorBar>
          <VolumeChart />
          <IndicatorBar>
            <Picker>MACD<Caret $size={5} /></Picker>
            <Stat $w={99} $ls={0.25}>DIF:0.179 ↑</Stat>
            <Stat $w={110} $ls={-0.1} $c="#fdba37">DEA:0.093 ↑</Stat>
            <Stat $ls={0} $c="#df2be8">M:0.172 ↑</Stat>
          </IndicatorBar>
          <MacdChart />
          <Axis><span>09:15</span><OpenTime>09:30</OpenTime><span>15:00</span></Axis>
          <Slider>
            <Handle $gap={105}><i /><i /><i /></Handle>
            <Handle $gap={134}><i /><i /><i /></Handle>
          </Slider>
        </ChartCol>

        <Book>
          <BookTabs><BookTab $on>千档</BookTab><BookTab>大单</BookTab><BookTab>分价</BookTab></BookTabs>
          <Segment><SegItem $on>按数量</SegItem><SegItem>按金额</SegItem></Segment>
          <BookLink>查看千档行情 &gt;</BookLink>
          <Levels rows={sells} sell />
          <Ratio />
          <BuyList><Levels rows={buys} sell={false} /></BuyList>
          <TradeTitle>分时成交<Caret $up $size={5.5} /></TradeTitle>
          <Trade><span>11:10</span><TradeCell $c={RED}>20.60</TradeCell><TradeCell $right $c={GREEN}>1578</TradeCell></Trade>
          <Trade><span>11:10</span><TradeCell $c={RED}>20.64↑</TradeCell><TradeCell $right $c={RED}>725</TradeCell></Trade>
          <Trade><span>11:10</span><TradeCell $c={RED}>20.64</TradeCell><TradeCell $right $c={RED}>1410</TradeCell></Trade>
        </Book>
      </Main>

      <BestRow>
        <BestCell><span>卖 1</span><em>20.68</em><span>3</span></BestCell>
        <BestCell><span>买 1</span><em>20.64</em><span>155</span></BestCell>
      </BestRow>
      <CutRow><CutFirst>2</CutFirst><span>96</span><span>1</span><span>10</span><span>4</span></CutRow>

      <IndexBar>
        <IndexName>上证指数</IndexName>
        <IndexNum $wide>3956.13</IndexNum>
        <IndexNum>0.03%</IndexNum>
        <IndexNum $right>1.34</IndexNum>
        <IndexNum $right $c={DARK}>5825 亿</IndexNum>
        <IndexCaret width="15" height="9" viewBox="0 0 15 9" fill="none" stroke={GREY} strokeWidth="1.700"><path d="M1 8l6.500-6.500L14 8" /></IndexCaret>
      </IndexBar>

      <Footer>
        <Actions>
          <TradeBtn $from="#f5514a" $to="#ea726c">买入</TradeBtn>
          <TradeBtn $from="#3c78fb" $to="#6a98ff">卖出</TradeBtn>
          <Tool><ToolIcon>撤</ToolIcon>撤单</Tool>
          <Tool>
            <ToolIcon>
              <svg width="38" height="42" viewBox="0 0 38 42" fill="none" stroke={DARK} strokeWidth="2.800">
                <path d="M16.500 2.300q2.500-1.400 5 0L33.500 9q2.500 1.500 2.500 4.300v15.400q0 2.800-2.500 4.300l-12 6.700q-2.500 1.400-5 0L4.500 33Q2 31.500 2 28.700V13.300Q2 10.500 4.500 9z" />
                <circle cx="19" cy="21" r="6.200" />
              </svg>
            </ToolIcon>
            设自选
          </Tool>
          <Tool>
            <ToolIcon>
              <svg width="30" height="8" viewBox="0 0 30 8" fill={DARK}><circle cx="4" cy="4" r="3" /><circle cx="15" cy="4" r="3" /><circle cx="26" cy="4" r="3" /></svg>
            </ToolIcon>
            更多
          </Tool>
        </Actions>
        <HomeBar />
      </Footer>
    </Screen>
  );
}
